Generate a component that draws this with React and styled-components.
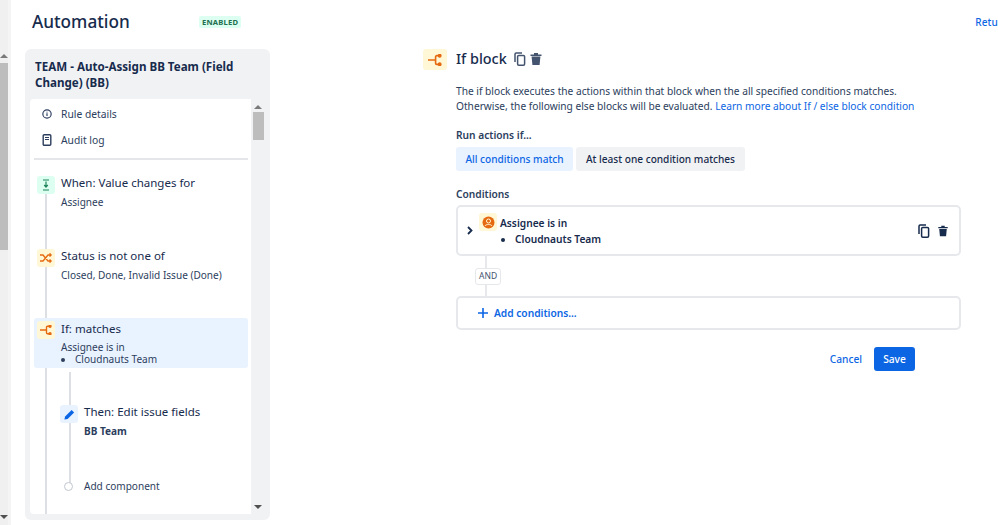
import React from "react";
import styled, { createGlobalStyle } from "styled-components";

const Global = createGlobalStyle`
  html, body { margin: 0; padding: 0; background: #fff; height: 100%; overflow: hidden; }
  #root { height: 100%; }
  * { box-sizing: border-box; }
  body { font-family: "Noto Sans", "Open Sans", sans-serif; color: #172b4d; }
`;

const Page = styled.div`
  display: flex; width: 998px; height: 525px; overflow: hidden; background: #fff;
`;
const OuterScroll = styled.div`
  width: 8px; height: 525px; background: #f0f0f0; display: flex; flex-direction: column;
  align-items: center; padding-top: 54px; flex: none;
`;
const ArrowUp = styled.i`
  display: block; width: 0; height: 0; flex: none;
  border-left: 4px solid transparent; border-right: 4px solid transparent;
  border-bottom: 4px solid #7a7a7a;
`;
const ArrowDown = styled.i`
  display: block; width: 0; height: 0; flex: none;
  border-left: 4px solid transparent; border-right: 4px solid transparent;
  border-top: 4px solid #505050;
`;
const OuterThumb = styled.div`
  width: 8px; height: 187px; margin-top: 5px; background: #bdbdbd; flex: none;
`;
const OuterSpacer = styled.div`flex: 1;`;
const OuterEnd = styled.div`height: 6px; flex: none;`;
const Gutter = styled.div`width: 3px; background: #f4f4f4; flex: none;`;

const Content = styled.div`
  flex: 1; display: flex; flex-direction: column; padding: 0 0 0 14px; min-width: 0;
`;
const Header = styled.header`
  height: 49px; display: flex; align-items: flex-start; padding: 10px 0 0 7px; flex: none;
`;
const Title = styled.h1`
  margin: 0; font-size: 17.2px; line-height: 24px; font-weight: 500; color: #172b4d; width: 167px;
`;
const Lozenge = styled.span`
  margin-top: 6px; height: 12px; line-height: 12px; padding: 0 3px; background: #dcfff1; color: #216e4e;
  font-size: 7.6px; font-weight: 700; border-radius: 2px; letter-spacing: .2px;
`;
const ReturnLink = styled.a`
  margin-left: auto; margin-top: 6px; white-space: nowrap; letter-spacing: .15px;
  font-size: 10px; line-height: 12px; font-weight: 500; color: #0c66e4;
`;
const Main = styled.div`display: flex; flex: 1; min-height: 0;`;
const Sidebar = styled.aside`
  width: 245px; height: 471px; background: #f1f2f4; border-radius: 6px; padding: 10px 5px 6px; flex: none;
  display: flex; flex-direction: column;
`;
const RuleName = styled.h2`
  margin: 0 0 0 5px; font-size: 11.6px; line-height: 15.5px; font-weight: 700; height: 40px; color: #172b4d;
`;
const SideBody = styled.div`
  flex: 1; display: flex; min-height: 0; background: #fff; border-radius: 4px 0 0 4px; width: 235px;
`;
const List = styled.div`width: 221px; padding: 0 3px 0 4px; display: flex; flex-direction: column; flex: none;`;
const MenuItem = styled.div`
  height: 26px; display: flex; align-items: center; gap: 8px; padding-left: 8px; font-size: 10.3px; color: #2c3e5d;
`;
const MenuIcon = styled.svg`width: 10px; height: 12px; flex: none; margin-right: 1px;`;
const Menu = styled.div`padding-top: 2px; height: 61px; border-bottom: 2px solid #e4e6ea; flex: none;`;
const Flow = styled.div`
  flex: 1; position: relative; padding-top: 16px; overflow: hidden;
  &::before {
    content: ""; position: absolute; left: 11px; top: 26px; bottom: 0; width: 2px; background: #dcdfe4;
  }
`;
const Step = styled.div`
  position: relative; display: flex; gap: 6px; padding: ${p => p.$active ? "3px 0 0 3px" : "0 0 0 3px"};
  height: ${p => p.$h}px; background: ${p => p.$active ? "#e9f2ff" : "transparent"}; border-radius: 3px;
`;
const IconBox = styled.div`
  width: ${p => p.$size || 18}px; height: ${p => p.$size2 || p.$size || 18}px; border-radius: 3px; flex: none;
  display: flex; align-items: center; justify-content: center; background: ${p => p.$bg};
`;
const StepText = styled.div`display: flex; flex-direction: column; min-width: 0; padding-top: ${p => p.$top || 0}px;`;
const StepTitle = styled.div`font-size: 11.5px; line-height: 16px; margin-top: -1px; color: #172b4d;`;
const StepSub = styled.div`font-size: 10.05px; line-height: 14px; margin-top: 3.5px; color: #2c3e5d; font-weight: ${p => p.$bold ? 700 : 400};`;
const Bullets = styled.ul`
  margin: 0; padding: 0 0 0 14px; font-size: 10.05px; line-height: 12px; color: #2c3e5d;
`;
const IfSub = styled.div`font-size: 10.05px; line-height: 12px; margin-top: 4px; color: #2c3e5d;`;
const Nested = styled.div`
  position: relative; padding-left: 23px; padding-top: 37px;
  &::before {
    content: ""; position: absolute; left: 35px; top: 4px; height: 112px; width: 2px; background: #dcdfe4;
  }
`;
const AddRow = styled.div`
  position: relative; display: flex; align-items: center; gap: 11px; padding-left: 7px; height: 14px;
  font-size: 10.05px; color: #2c3e5d;
`;
const Dot = styled.i`
  width: 9px; height: 9px; border-radius: 50%; border: 1.5px solid #c1c7d0; background: #fff; flex: none;
`;
const InnerScroll = styled.div`
  width: 14px; height: 100%; background: #f1f2f4; display: flex; flex-direction: column; align-items: center; padding: 6px 0 5px; flex: none;
`;
const InnerThumb = styled.div`width: 11px; height: 28px; margin-top: 3px; background: #bdbdbd; flex: none;`;

const Detail = styled.section`
  flex: 1; padding-left: 153px; min-width: 0; display: flex; flex-direction: column;
`;
const DetailHead = styled.div`display: flex; align-items: center; height: 21px; flex: none;`;
const DetailTitle = styled.h2`margin: -2px 0 0 9px; font-size: 14.4px; line-height: 21px; font-weight: 500; color: #172b4d;`;
const HeadIcons = styled.div`display: flex; gap: 2px; align-items: center; margin: -1px 0 0 6px; color: #44546f;`;
const Body = styled.div`margin-left: 33px; width: 505px; display: flex; flex-direction: column;`;
const Desc = styled.p`margin: 14px 0 0; font-size: 10.18px; line-height: 15px; color: #2c3e5d; white-space: nowrap;`;
const A = styled.a`color: #0c66e4;`;
const Label = styled.div`font-size: 10.2px; line-height: 14px; font-weight: 600; color: #2c3e5d;`;
const RunLabel = styled(Label)`margin-top: 14px;`;
const CondLabel = styled(Label)`margin-top: 16px;`;
const Segments = styled.div`display: flex; gap: 3px; margin-top: 5px;`;
const Segment = styled.button`
  width: ${p => p.$w}px; height: 24px; border: 0; border-radius: 3px; padding: 0; font: 500 10.1px "Noto Sans", sans-serif;
  background: ${p => p.$on ? "#e9f2ff" : "#f1f2f4"}; color: ${p => p.$on ? "#0c66e4" : "#172b4d"};
`;
const Card = styled.div`
  margin-top: 4px; width: 505px; height: 51px; border: 2px solid #e6e8ec; border-radius: 5px;
  display: flex; align-items: center; padding: 0 10px 0 9px; background: #fff;
`;
const Chevron = styled.svg`width: 6px; height: 9px; flex: none; margin-right: 6px;`;
const CondIconWrap = styled.div`align-self: flex-start; margin-top: 6px; margin-right: 3px;`;
const CondText = styled.div`flex: 1; font-size: 10.2px; font-weight: 600; color: #172b4d; line-height: 16px;`;
const CondList = styled.ul`margin: 0; padding: 0 0 0 15px;`;
const CardIcons = styled.div`display: flex; gap: 6px; align-items: center; color: #172b4d;`;
const Connector = styled.div`
  height: 40px; width: 60px; margin-left: 19px; position: relative; display: flex; align-items: center;
  &::before { content: ""; position: absolute; left: 10px; top: 0; bottom: 0; width: 2px; background: #e6e8ec; }
`;
const AndTag = styled.span`
  position: relative; height: 17px; padding: 0 3px; line-height: 14px; font-size: 8.5px; color: #44546f; background: #fff;
  border: 1.5px solid #e6e8ec; border-radius: 3px;
`;
const AddCard = styled.div`
  width: 505px; height: 34px; border: 2px solid #e6e8ec; border-radius: 5px; display: flex; align-items: center;
  padding-left: 20px; gap: 6px; color: #0c66e4; font-size: 10.2px; font-weight: 600;
`;
const Actions = styled.div`
  margin-top: 17px; width: 459px; display: flex; justify-content: flex-end; align-items: center; gap: 12px;
`;
const Cancel = styled.a`font-size: 10.2px; font-weight: 500; color: #0c66e4;`;
const Save = styled.button`
  width: 41px; height: 24px; border: 0; border-radius: 3px; background: #0c66e4; color: #fff;
  font: 500 10.2px "Noto Sans", sans-serif; padding: 0;
`;

const Info = () => (
  <MenuIcon viewBox="0 0 12 12"><circle cx="6" cy="6" r="5" fill="none" stroke="#2c3e5d" strokeWidth="1.4"/><path d="M6 5.200v3.300M6 3.200v1" stroke="#2c3e5d" strokeWidth="1.4"/></MenuIcon>
);
const Log = () => (
  <MenuIcon viewBox="0 0 10 12"><rect x="1.200" y=".8" width="7.600" height="10.400" rx="1" fill="none" stroke="#2c3e5d" strokeWidth="1.4"/><path d="M3 3.500h4M3 5.500h4" stroke="#2c3e5d" strokeWidth="1.2"/></MenuIcon>
);
const WhenGlyph = () => (
  <svg width="10" height="12" viewBox="0 0 10 12" fill="none" stroke="#1f845a" strokeWidth="1.2"><path d="M2 1h6M2 11h6M5 2.500v5M3.200 6 5 8l1.800-2"/></svg>
);
const Shuffle = () => (
  <svg width="12" height="10" viewBox="0 0 12 10" fill="none" stroke="#e56910" strokeWidth="1.3"><path d="M0 2h3l5 6h3M0 8h3l5-6h3M9.600.4 11.200 2 9.600 3.600M9.600 6.400 11.200 8 9.600 9.600"/></svg>
);
const Branch = ({ w = 12, h = 10 }) => (
  <svg width={w} height={h} viewBox="0 0 12 10" fill="none" stroke="#e56910" strokeWidth="1.4"><path d="M0 5h6M9.500 1.300H7.500a1 1 0 0 0-1 1v5.400a1 1 0 0 0 1 1h2"/><circle cx="10" cy="1.300" r="1" fill="#e56910"/><circle cx="10" cy="8.700" r="1" fill="#e56910"/></svg>
);
const Pencil = () => (
  <svg width="11" height="11" viewBox="0 0 11 11"><path d="M7.600.9 10.100 3.400 3.600 9.900.4 10.600 1.100 7.400z" fill="#0c66e4"/></svg>
);
const Copy = ({ s = 14 }) => (
  <svg width={s} height={s} viewBox="0 0 14 14" fill="none" stroke="currentColor" strokeWidth="1.5"><path d="M2 10V2.200A1.200 1.200 0 0 1 3.200 1H9"/><rect x="4.600" y="3.400" width="7" height="9.800" rx="1.200"/></svg>
);
const Trash = ({ s = 14 }) => (
  <svg width={s} height={s} viewBox="0 0 14 14" fill="currentColor"><path d="M1.500 2.400h11v1.500h-11zM5 1h4v1.500H5zM2.600 4.600h8.800l-.8 8.400H3.400z"/></svg>
);
const Person = () => (
  <svg width="13" height="13" viewBox="0 0 13 13"><circle cx="6.500" cy="6.500" r="6" fill="#e56910"/><circle cx="6.500" cy="5" r="2" fill="none" stroke="#fff7d6" strokeWidth="1"/><path d="M3 10c.5-2 6.500-2 7 0" fill="none" stroke="#fff7d6" strokeWidth="1"/></svg>
);

export default function App() {
  return (
    <Page>
      <Global />
      <OuterScroll>
        <ArrowUp />
        <OuterThumb />
        <OuterSpacer />
        <ArrowDown />
        <OuterEnd />
      </OuterScroll>
      <Gutter />
      <Content>
        <Header>
          <Title>Automation</Title>
          <Lozenge>ENABLED</Lozenge>
          <ReturnLink>Retu</ReturnLink>
        </Header>
        <Main>
          <Sidebar>
            <RuleName>TEAM - Auto-Assign BB Team (Field Change) (BB)</RuleName>
            <SideBody>
              <List>
                <Menu>
                  <MenuItem><Info />Rule details</MenuItem>
                  <MenuItem><Log />Audit log</MenuItem>
                </Menu>
                <Flow>
                  <Step $h={73}>
                    <IconBox $bg="#dcfff1"><WhenGlyph /></IconBox>
                    <StepText>
                      <StepTitle>When: Value changes for</StepTitle>
                      <StepSub>Assignee</StepSub>
                    </StepText>
                  </Step>
                  <Step $h={69}>
                    <IconBox $bg="#fff7d6"><Shuffle /></IconBox>
                    <StepText>
                      <StepTitle>Status is not one of</StepTitle>
                      <StepSub>Closed, Done, Invalid Issue (Done)</StepSub>
                    </StepText>
                  </Step>
                  <Step $h={50} $active>
                    <IconBox $bg="#fff7d6"><Branch /></IconBox>
                    <StepText $top={1}>
                      <StepTitle>If: matches</StepTitle>
                      <IfSub>Assignee is in</IfSub>
                      <Bullets><li>Cloudnauts Team</li></Bullets>
                    </StepText>
                  </Step>
                  <Nested>
                    <Step $h={74}>
                      <IconBox $bg="#e9f2ff"><Pencil /></IconBox>
                      <StepText>
                        <StepTitle>Then: Edit issue fields</StepTitle>
                        <StepSub $bold>BB Team</StepSub>
                      </StepText>
                    </Step>
                    <AddRow><Dot />Add component</AddRow>
                  </Nested>
                </Flow>
              </List>
              <InnerScroll>
                <ArrowUp />
                <InnerThumb />
                <OuterSpacer />
                <ArrowDown />
              </InnerScroll>
            </SideBody>
          </Sidebar>
          <Detail>
            <DetailHead>
              <IconBox $size={24} $size2={21} $bg="#fff7d6"><Branch w={14} h={12} /></IconBox>
              <DetailTitle>If block</DetailTitle>
              <HeadIcons><Copy /><Trash /></HeadIcons>
            </DetailHead>
            <Body>
              <Desc>
                The if block executes the actions within that block when the all specified conditions matches.<br />
                Otherwise, the following else blocks will be evaluated. <A>Learn more about If / else block condition</A>
              </Desc>
              <RunLabel>Run actions if...</RunLabel>
              <Segments>
                <Segment $on $w={117}>All conditions match</Segment>
                <Segment $w={169}>At least one condition matches</Segment>
              </Segments>
              <CondLabel>Conditions</CondLabel>
              <Card>
                <Chevron viewBox="0 0 6 9"><path d="M1 1 4.500 4.500 1 8" fill="none" stroke="#172b4d" strokeWidth="1.8"/></Chevron>
                <CondIconWrap><IconBox $bg="#fff7d6"><Person /></IconBox></CondIconWrap>
                <CondText>
                  Assignee is in
                  <CondList><li>Cloudnauts Team</li></CondList>
                </CondText>
                <CardIcons><Copy /><Trash s={12} /></CardIcons>
              </Card>
              <Connector><AndTag>AND</AndTag></Connector>
              <AddCard>
                <svg width="10" height="10" viewBox="0 0 10 10"><path d="M5 0v10M0 5h10" stroke="#0c66e4" strokeWidth="1.6"/></svg>
                Add conditions...
              </AddCard>
              <Actions>
                <Cancel>Cancel</Cancel>
                <Save>Save</Save>
              </Actions>
            </Body>
          </Detail>
        </Main>
      </Content>
    </Page>
  );
}
